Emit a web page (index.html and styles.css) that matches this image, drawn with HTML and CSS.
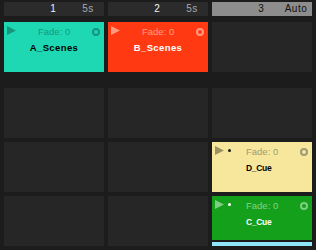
FILE: index.html
```html
<!DOCTYPE html>
<html>
<head>
<meta charset="utf-8">
<link rel="stylesheet" href="styles.css">
</head>
<body>
<div class="page">
  <div class="heads">
    <div class="head"><span class="num">1</span><span class="dur">5s</span></div>
    <div class="head"><span class="num">2</span><span class="dur">5s</span></div>
    <div class="head sel"><span class="num">3</span><span class="dur">Auto</span></div>
  </div>
  <div class="grid scenes">
    <div class="cell clip teal">
      <div class="top">
        <span class="icons"><svg class="play" width="9" height="9" viewBox="0 0 9 9"><polygon points="0,0 9,4.5 0,9"/></svg></span>
        <span class="fade">Fade: 0</span>
        <svg class="ring" width="8" height="8" viewBox="0 0 8 8"><circle cx="4" cy="4" r="3"/></svg>
      </div>
      <div class="name scene-name">A_Scenes</div>
    </div>
    <div class="cell clip red">
      <div class="top">
        <span class="icons"><svg class="play" width="9" height="9" viewBox="0 0 9 9"><polygon points="0,0 9,4.5 0,9"/></svg></span>
        <span class="fade">Fade: 0</span>
        <svg class="ring" width="8" height="8" viewBox="0 0 8 8"><circle cx="4" cy="4" r="3"/></svg>
      </div>
      <div class="name scene-name">B_Scenes</div>
    </div>
    <div class="cell empty"></div>
  </div>
  <div class="grid cues">
    <div class="cell empty"></div>
    <div class="cell empty"></div>
    <div class="cell empty"></div>
    <div class="cell empty"></div>
    <div class="cell empty"></div>
    <div class="cell clip yellow">
      <div class="top">
        <span class="icons"><svg class="play" width="9" height="9" viewBox="0 0 9 9"><polygon points="0,0 9,4.5 0,9"/></svg><span class="dot"></span></span>
        <span class="fade">Fade: 0</span>
        <svg class="ring" width="8" height="8" viewBox="0 0 8 8"><circle cx="4" cy="4" r="3"/></svg>
      </div>
      <div class="name cue-name">D_Cue</div>
    </div>
    <div class="cell empty"></div>
    <div class="cell empty"></div>
    <div class="cell playing">
      <div class="clip green">
        <div class="top">
          <span class="icons"><svg class="play" width="9" height="9" viewBox="0 0 9 9"><polygon points="0,0 9,4.5 0,9"/></svg><span class="dot"></span></span>
          <span class="fade">Fade: 0</span>
          <svg class="ring" width="8" height="8" viewBox="0 0 8 8"><circle cx="4" cy="4" r="3"/></svg>
        </div>
        <div class="name cue-name">C_Cue</div>
      </div>
      <div class="progress"></div>
    </div>
  </div>
</div>
</body>
</html>
```
FILE: styles.css
```css
html, body {
  margin: 0;
  padding: 0;
  background: #1c1c1c;
}
.page {
  width: 316px;
  height: 250px;
  box-sizing: border-box;
  padding: 2px 4px 4px 4px;
  font-family: "Liberation Sans", Arial, sans-serif;
}
.heads {
  display: grid;
  grid-template-columns: repeat(3, 100px);
  column-gap: 4px;
  height: 14px;
  margin-bottom: 6px;
}
.head {
  display: flex;
  align-items: center;
  background: #2b2b2b;
  font-size: 10px;
  line-height: 14px;
}
.head .num {
  width: 72px;
  box-sizing: border-box;
  padding-left: 26px;
  text-align: center;
  color: #f2f2f2;
}
.head .dur {
  width: 24px;
  text-align: center;
  color: #a8a8a8;
  letter-spacing: 0.5px;
}
.head.sel {
  background: #8d8d8d;
}
.head.sel .num,
.head.sel .dur {
  color: #111;
}
.grid {
  display: grid;
  grid-template-columns: repeat(3, 100px);
  grid-auto-rows: 50px;
  gap: 4px;
}
.scenes {
  margin-bottom: 16px;
}
.cell.empty {
  background: #262626;
}
.clip {
  box-sizing: border-box;
  height: 50px;
}
.top {
  display: flex;
  align-items: center;
  height: 9px;
  padding: 4px 4px 0 3px;
}
.icons {
  display: flex;
  align-items: center;
  width: 31px;
  flex: none;
}
.play {
  display: block;
}
.dot {
  width: 3px;
  height: 3px;
  border-radius: 50%;
  margin-left: 4px;
}
.fade {
  font-size: 9.5px;
  line-height: 9px;
  padding-top: 2px;
}
.ring {
  display: block;
  margin-left: auto;
  margin-top: 2px;
}
.ring circle {
  fill: none;
  stroke-width: 2;
}
.name {
  font-weight: bold;
  margin-top: 8px;
  line-height: 10px;
}
.scene-name {
  font-size: 9.5px;
  letter-spacing: 0.4px;
  text-align: center;
}
.cue-name {
  font-size: 8.5px;
  letter-spacing: -0.3px;
  padding-left: 34px;
}
.teal { background: #1ed8b4; }
.teal .play polygon { fill: #17957d; }
.teal .fade { color: #16987f; }
.teal .ring circle { stroke: #17957d; }
.teal .name { color: #000; }

.red { background: #ff3a12; }
.red .play polygon { fill: #ff9a80; }
.red .fade { color: #ff9c84; }
.red .ring circle { stroke: #ff9a80; }
.red .name { color: #fff; }

.yellow { background: #f6e79c; }
.yellow .play polygon { fill: #9c9264; }
.yellow .dot { background: #1a1a1a; }
.yellow .fade { color: #a29a74; }
.yellow .ring circle { stroke: #a29a74; }
.yellow .name { color: #000; }

.playing {
  display: flex;
  flex-direction: column;
}
.green {
  background: #14a01a;
  height: 44px;
}
.green .play polygon { fill: #7fcf82; }
.green .dot { background: #fff; }
.green .fade { color: #84d286; }
.green .ring circle { stroke: #7fcf82; }
.green .name { color: #fff; }
.progress {
  margin-top: 2px;
  height: 4px;
  background: #8fe6fb;
}
```
